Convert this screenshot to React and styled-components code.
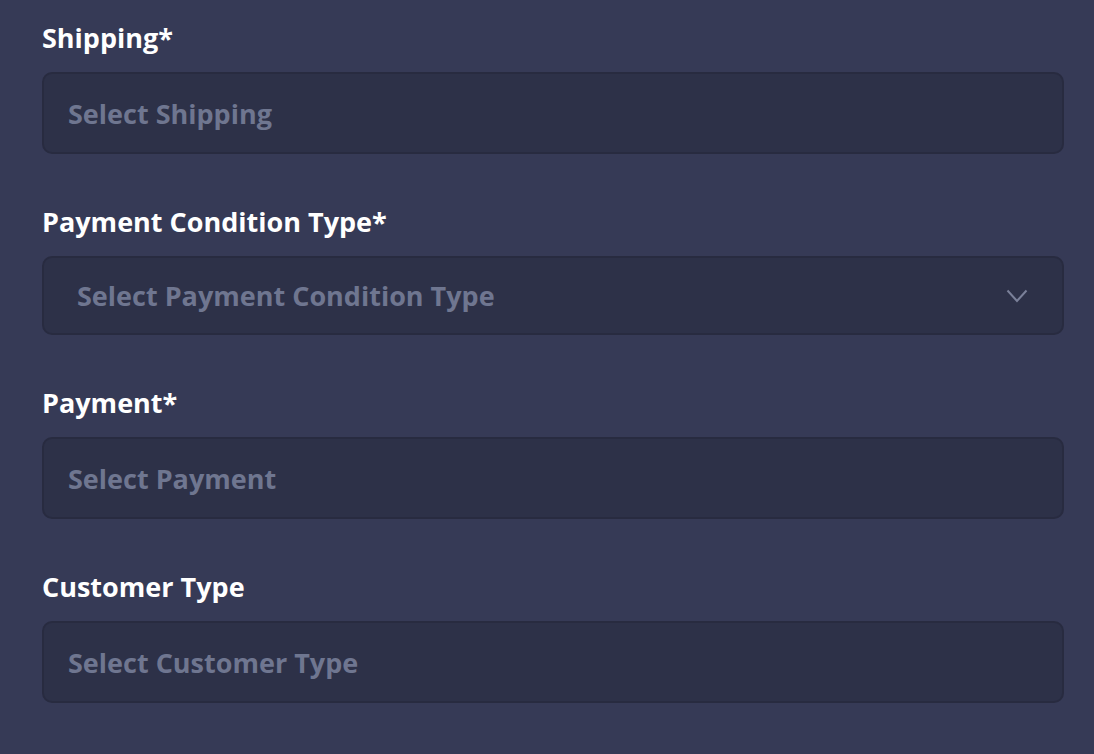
import React from 'react';
import styled, { createGlobalStyle } from 'styled-components';

const GlobalStyle = createGlobalStyle`
  html, body {
    margin: 0;
    padding: 0;
    background: #363a56;
  }
  body {
    font-family: "Open Sans", Lato, sans-serif;
  }
`;

const Form = styled.div`
  display: flex;
  flex-direction: column;
  gap: 50px;
  padding: 20px 30px 0 42px;
  min-height: 754px;
  box-sizing: border-box;
`;

const Field = styled.div`
  display: flex;
  flex-direction: column;
  gap: 16px;
`;

const Label = styled.label`
  color: #ffffff;
  font-size: 27px;
  font-weight: 700;
  line-height: 36px;
`;

const Box = styled.div`
  display: flex;
  align-items: center;
  justify-content: space-between;
  height: ${(p) => (p.select ? 79 : 82)}px;
  box-sizing: border-box;
  padding: 0 ${(p) => (p.select ? 34 : 24)}px 0 ${(p) => (p.select ? 33 : 24)}px;
  background: #2d3148;
  border: 2px solid #282b40;
  border-radius: 10px;
  color: #6f7690;
  font-size: 27px;
  font-weight: 700;
`;

const Chevron = () => (
  <svg width="22" height="14" viewBox="0 0 22 14" fill="none">
    <path d="M1.5 1.5 L11 12 L20.5 1.5" stroke="#7a8099" strokeWidth="2" />
  </svg>
);

const fields = [
  { label: 'Shipping*', placeholder: 'Select Shipping' },
  { label: 'Payment Condition Type*', placeholder: 'Select Payment Condition Type', select: true },
  { label: 'Payment*', placeholder: 'Select Payment' },
  { label: 'Customer Type', placeholder: 'Select Customer Type' },
];

const App = () => {
  return (
    <>
      <GlobalStyle />
      <Form>
        {fields.map((f) => (
          <Field key={f.label}>
            <Label>{f.label}</Label>
            <Box select={f.select}>
              <span>{f.placeholder}</span>
              {f.select && <Chevron />}
            </Box>
          </Field>
        ))}
      </Form>
    </>
  );
};

export default App;
